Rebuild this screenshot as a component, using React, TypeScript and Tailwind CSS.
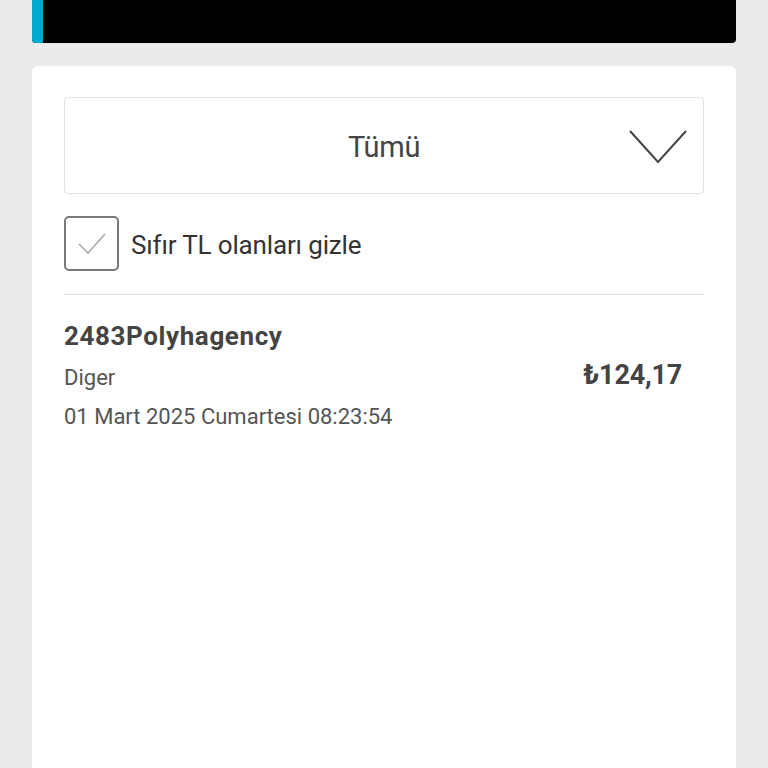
import React, { useState } from 'react'

// ── Hesap hareketleri filtre ekranı ──────────────────
export default function App() {
    const [hideZero, setHideZero] = useState(true)

    return (
        <div
            className="min-h-[768px] bg-[#ebebeb] px-8"
            style={{ fontFamily: 'Roboto, "Noto Sans", sans-serif' }}
        >
            <div className="h-[43px] bg-black rounded-b-[4px] overflow-hidden flex">
                <div className="w-[11px] bg-[#00a9ce]" />
            </div>

            <div className="mt-[23px] bg-white rounded-t-[6px] min-h-[702px] px-8 pt-[31px]">
                <button className="w-full h-[97px] border border-[#e3e3e3] rounded-[4px] flex items-center relative pt-[4px]">
                    <span className="flex-1 text-center text-[29px] text-[#444] tracking-[-0.3px]">Tümü</span>
                    <svg
                        className="absolute right-[16px] top-[32px]"
                        width="58"
                        height="34"
                        viewBox="0 0 58 34"
                        fill="none"
                    >
                        <path d="M1 1 L29 32 L57 1" stroke="#444" strokeWidth="2" />
                    </svg>
                </button>

                <label className="flex items-center gap-3 mt-[22px] cursor-pointer">
                    <span
                        onClick={() => setHideZero(v => !v)}
                        className="w-[55px] h-[55px] border-2 border-[#7a7a7a] rounded-[5px] flex items-center justify-center shrink-0"
                    >
                        {hideZero && (
                            <svg width="28" height="22" viewBox="0 0 28 22" fill="none">
                                <path d="M1 11 L10 20 L27 1" stroke="#aaa" strokeWidth="1.6" />
                            </svg>
                        )}
                    </span>
                    <span className="text-[26px] text-[#333] tracking-[-0.15px] pt-[4px]">Sıfır TL olanları gizle</span>
                </label>

                <div className="h-px bg-[#e0e0e0] mt-[23px]" />

                <div className="flex items-center pt-[26px]">
                    <div className="flex-1">
                        <div className="text-[26px] font-bold text-[#444] tracking-[0.6px] leading-[30px]">2483Polyhagency</div>
                        <div className="text-[22px] text-[#555] mt-[13px] leading-[28px]">Diger</div>
                        <div className="text-[22px] text-[#555] mt-[11px] leading-[28px]">01 Mart 2025 Cumartesi 08:23:54</div>
                    </div>
                    <div className="text-[27px] font-bold text-[#444] tracking-[-0.2px] pr-[22px] -mt-[2px]">₺124,17</div>
                </div>
            </div>
        </div>
    )
}
